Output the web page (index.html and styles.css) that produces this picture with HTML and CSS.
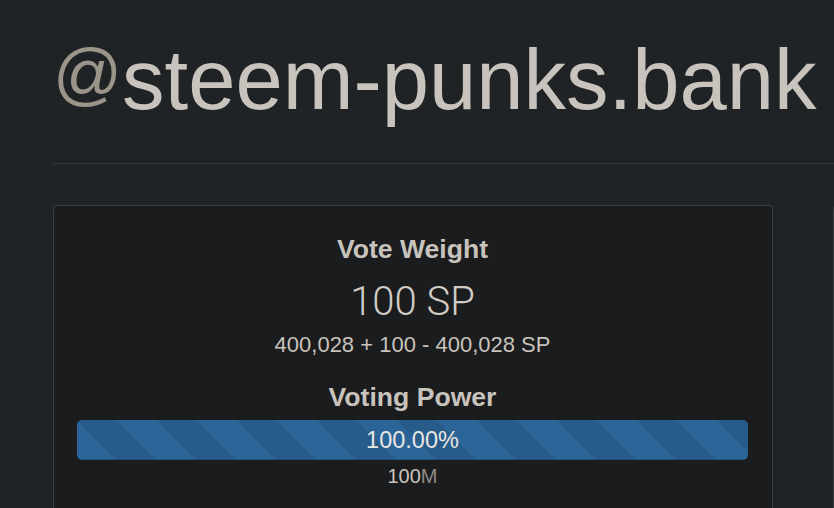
FILE: index.html
```html
<!DOCTYPE html>
<html lang="en">
<head>
<meta charset="utf-8">
<title>@steem-punks.bank</title>
<link rel="stylesheet" href="styles.css">
</head>
<body>
<div class="page">
  <h1 class="title"><span class="at">@</span>steem-punks.bank</h1>
  <hr class="rule">
  <div class="row">
    <div class="card main">
      <h3 class="label">Vote Weight</h3>
      <div class="big">100 SP</div>
      <div class="calc">400,028 + 100 - 400,028 SP</div>
      <h3 class="label power">Voting Power</h3>
      <div class="progress">
        <div class="bar" style="width: 100%">100.00%</div>
      </div>
      <div class="mana">100<span class="unit">M</span></div>
    </div>
    <div class="card side"></div>
  </div>
</div>
</body>
</html>
```

FILE: styles.css
```css
html, body {
  margin: 0;
  padding: 0;
  background: #202325;
  overflow: hidden;
}
body {
  width: 834px;
  height: 508px;
  font-family: "Liberation Sans", Arial, Helvetica, sans-serif;
  color: #c8c3bc;
}
.page {
  width: 1400px;
  padding-left: 53px;
  padding-top: 34px;
}
.title {
  margin: 0;
  font-size: 85px;
  font-weight: 400;
  line-height: 92px;
  height: 92px;
  color: #c8c3bc;
  white-space: nowrap;
}
.title .at {
  color: #9b9489;
  font-size: 68px;
  line-height: 0;
  vertical-align: 12px;
  margin-right: 0;
}
.rule {
  margin: 37px 0 0 0;
  border: 0;
  border-top: 1px solid #373a3d;
  height: 0;
}
.row {
  display: flex;
  gap: 60px;
  margin-top: 41px;
}
.card {
  background: #1b1c1e;
  border: 1px solid #3b3f42;
  border-radius: 4px;
  height: 400px;
}
.main {
  padding: 28px 24px 0 23px;
  box-sizing: border-box;
  width: 720px;
  text-align: center;
}
.side {
  width: 400px;
}
.label {
  margin: 0;
  font-size: 26.6px;
  line-height: 30px;
  font-weight: 700;
  color: #c8c3bc;
}
.big {
  margin-top: 14px;
  font-family: Roboto, "Liberation Sans", sans-serif;
  font-weight: 300;
  font-size: 40px;
  line-height: 48px;
  color: #d0ccc5;
}
.calc {
  margin-top: 6px;
  font-size: 22px;
  line-height: 26px;
  color: #c8c3bc;
}
.power {
  margin-top: 24px;
}
.progress {
  margin-top: 8px;
  height: 40px;
  border-radius: 5px;
  background: #1f2224;
  overflow: hidden;
}
.bar {
  height: 40px;
  line-height: 40px;
  font-size: 23.5px;
  color: #e8e6e3;
  background-color: #2b6598;
  background-image: linear-gradient(45deg,
    rgba(0,0,0,.1) 25%, transparent 25%, transparent 50%,
    rgba(0,0,0,.1) 50%, rgba(0,0,0,.1) 75%, transparent 75%, transparent);
  background-size: 80px 80px;
  box-shadow: inset 0 -1px 0 rgba(0,0,0,.15);
}
.mana {
  margin-top: 4px;
  font-size: 20px;
  line-height: 24px;
  color: #c8c3bc;
}
.unit {
  color: #8f8a82;
}
```
